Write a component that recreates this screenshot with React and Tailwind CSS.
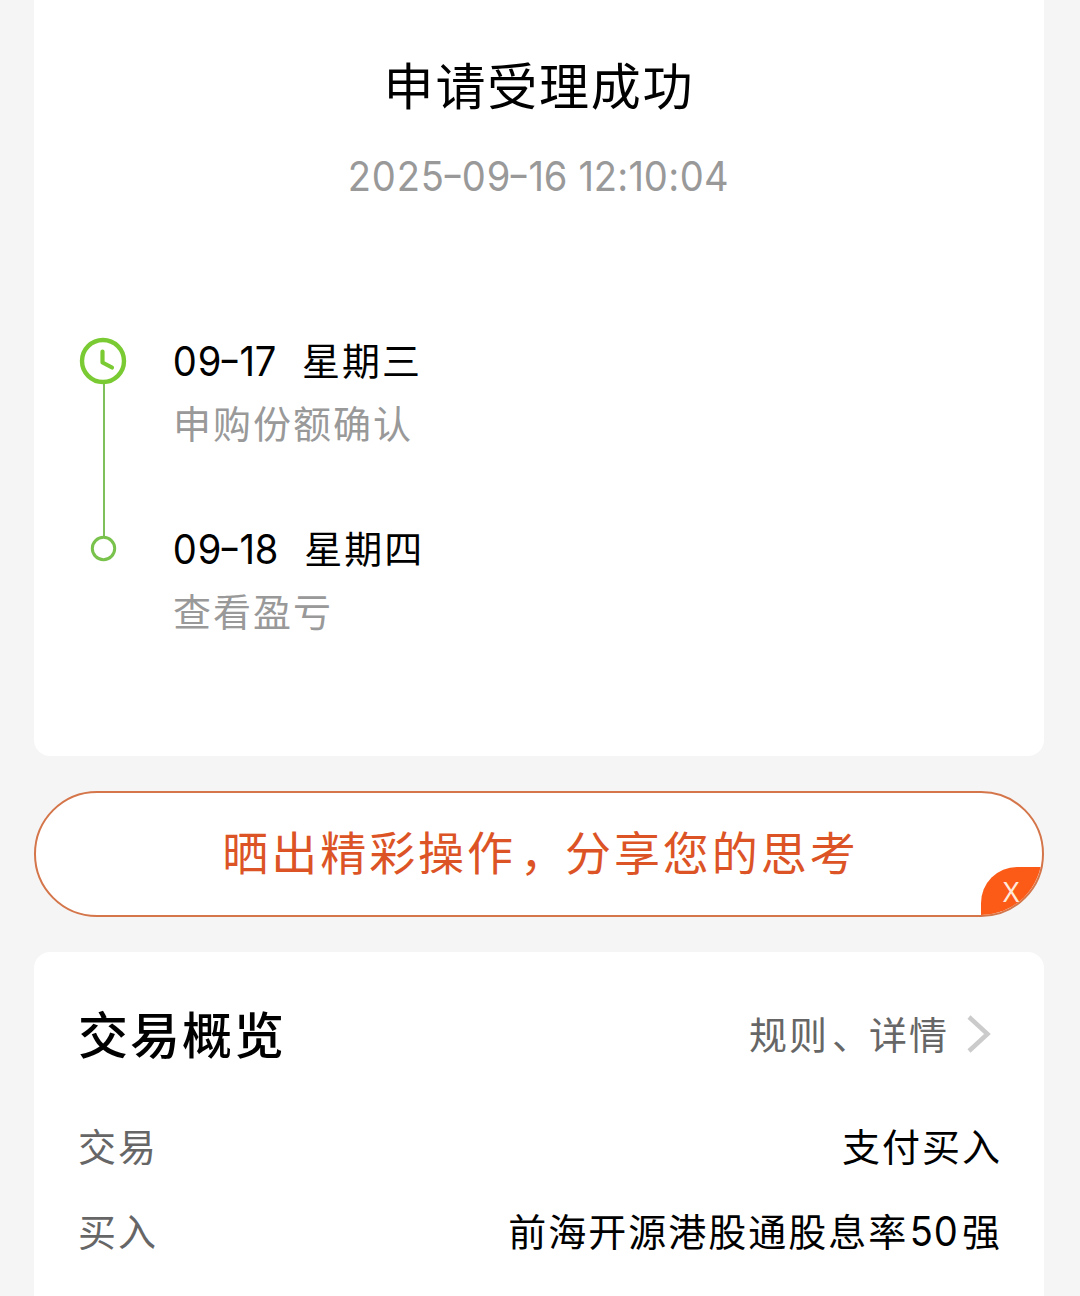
import React from 'react';

// --- Data ---

const steps = [
    { date: '09-17', weekday: '星期三', label: '申购份额确认' },
    { date: '09-18', weekday: '星期四', label: '查看盈亏' },
];

const rows = [
    { name: '交易', value: '支付买入' },
    { name: '买入', value: '前海开源港股通股息率', count: '50', suffix: '强' },
];

// --- Small pieces ---

// Slightly condensed Inter digits, with a wider hyphen between the groups
function Digits({ text, className }) {
    return (
        <span className={`font-['Inter',sans-serif] whitespace-pre ${className}`}>
            {text.split('').map((char, i) => (
                char === '-'
                    ? <span key={i} className="inline-block scale-x-[1.2] -translate-x-px -translate-y-[2px]">-</span>
                    : <span key={i} className="inline-block scale-x-[0.93]">{char}</span>
            ))}
        </span>
    );
}

function Timeline() {
    return (
        <svg className="block w-[48px] h-[226px] shrink-0" viewBox="0 0 48 226" fill="none">
            <path d="M25 46V200" stroke="#7fc05a" strokeWidth="2" />
            <circle cx="24" cy="24" r="21" stroke="#7acb33" strokeWidth="4.4" />
            <path d="M23.5 14.5V25.5L33 30.5" stroke="#7acb33" strokeWidth="4.2" strokeLinecap="round" strokeLinejoin="round" />
            <circle cx="24.5" cy="211.5" r="11.2" stroke="#79c24c" strokeWidth="3" />
        </svg>
    );
}

function Step({ step }) {
    return (
        <div className="h-[188px]">
            <div className="flex items-center h-[50px] text-black">
                <Digits text={step.date} className="-ml-px mt-[2px] text-[41px] tracking-[-1.2px]" />
                <span className="ml-[26px] -mt-[6px] text-[38px] tracking-[2px]">{step.weekday}</span>
            </div>
            <div className="flex items-center h-[50px] mt-[10px] text-[38px] tracking-[2px] text-[#999]">
                {step.label}
            </div>
        </div>
    );
}

function ShareBanner() {
    return (
        <div className="relative flex items-center justify-center mt-[35px] h-[126px] rounded-full border-2 border-[#d4754a] bg-white overflow-hidden">
            <span className="ml-[3px] -mt-[9px] text-[46px] leading-none tracking-[2.95px] text-[#dc5426]">
                晒出精彩操作<span className="relative left-[4px]">，</span>分享您的思考
            </span>
            <button className="absolute -right-px bottom-0 flex items-center w-[62px] h-[48px] pl-[22px] rounded-tl-[36px] bg-[#fc5b17] text-[28px] text-[#ffe9dc] font-['Noto_Sans',sans-serif]">
                X
            </button>
        </div>
    );
}

function Overview() {
    return (
        <div className="mt-[35px] h-[360px] rounded-t-[16px] bg-white pl-[44px] pr-[42px] pt-[44px]">
            <div className="flex items-center justify-between h-[72px]">
                <h2 className="text-[50px] tracking-[2px] font-medium text-black">交易概览</h2>
                <div className="flex items-center text-[38px] tracking-[2px] text-[#666]">
                    <span className="mt-px">规则<span className="relative left-[3px]">、</span>详情</span>
                    <svg className="ml-[17px] mt-[4px] mr-[10px] w-[26px] h-[40px]" viewBox="0 0 26 40" fill="none">
                        <path d="M3 3L21.5 20L3 37" stroke="#cbcbcb" strokeWidth="4.5" />
                    </svg>
                </div>
            </div>
            <div className="mt-[34px]">
                {rows.map((row) => (
                    <div key={row.name} className="flex items-center justify-between h-[85px] text-[38px] tracking-[2px]">
                        <span className="text-[#666]">{row.name}</span>
                        <span className="flex items-center text-black">
                            {row.value}
                            {row.count && <Digits text={row.count} className="mt-[5px] ml-px mr-[4px] text-[41px] tracking-[-1px]" />}
                            {row.suffix}
                        </span>
                    </div>
                ))}
            </div>
        </div>
    );
}

// --- Page ---

export default function App() {
    return (
        <div className="w-[1080px] h-[1296px] overflow-hidden bg-[#f5f5f5] pl-[34px] pr-[36px] font-['Noto_Sans_CJK_SC',sans-serif]">
            <div className="h-[756px] rounded-b-[16px] bg-white">
                <div className="flex flex-col items-center pt-[47px]">
                    <h1 className="h-[72px] flex items-center text-[50px] tracking-[1.8px] text-black">申请受理成功</h1>
                    <div className="h-[50px] mt-[33px] mr-[2px] flex items-center text-[#999]">
                        <Digits text="2025-09-16 12:10:04" className="text-[41px] tracking-[-1.2px]" />
                    </div>
                </div>
                <div className="flex mt-[134px] pl-[45px]">
                    <div className="pt-[1px]">
                        <Timeline />
                    </div>
                    <div className="ml-[46px]">
                        {steps.map((step) => (
                            <Step key={step.date} step={step} />
                        ))}
                    </div>
                </div>
            </div>
            <ShareBanner />
            <Overview />
        </div>
    );
}
